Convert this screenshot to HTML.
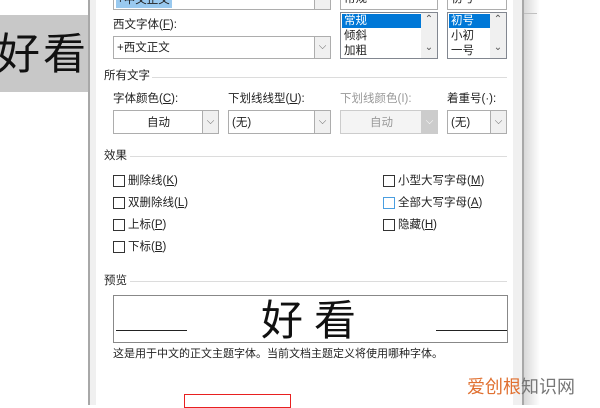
<!DOCTYPE html><html><head><meta charset="utf-8"><style>
*{margin:0;padding:0;box-sizing:border-box}
body{width:600px;height:405px;overflow:hidden;background:#fff;position:relative;font-family:"Liberation Sans","Microsoft YaHei","Noto Sans CJK SC",sans-serif;font-size:11.5px;color:#222}
.a{position:absolute}
.t{position:absolute;white-space:nowrap;line-height:14px}
.box{position:absolute;border:1px solid #adadad;background:#fff}
.btn{position:absolute;top:0;right:0;bottom:0;width:16px;border-left:1px solid #adadad;background:#f0f0f0;color:#666;font-size:10px;text-align:center}
.hl{position:absolute;height:1px;background:#dcdcdc}
.cb{position:absolute;width:12px;height:12px;border:1px solid #333;background:#fff}
u{text-decoration:underline}
</style></head><body>
<div class="a" style="left:0;top:15px;width:88px;height:77px;background:#c8c8c8"></div>
<div class="t" style="left:-3px;top:24px;font-size:43px;line-height:54px;color:#111;font-family:'Noto Sans CJK SC',sans-serif;letter-spacing:3px">好看</div>
<div class="a" style="left:88px;top:0;width:2px;height:405px;background:#a8a8a8"></div>
<div class="a" style="left:90px;top:0;width:6px;height:405px;background:#f0f0f0"></div>
<div class="a" style="left:513px;top:0;width:9px;height:405px;background:#f0f0f0"></div>
<div class="a" style="left:522px;top:0;width:2px;height:405px;background:#a8a8a8"></div>
<div class="a" style="left:524px;top:0;width:16px;height:405px;background:linear-gradient(90deg,#d8d8d8,#fff)"></div>
<div class="a" style="left:524px;top:13px;width:13px;height:1px;background:#c0c0c0"></div>
<div class="box" style="left:113px;top:-14px;width:218px;height:24px"><div class="a" style="left:2px;top:8px;width:56px;height:13px;background:#99c9ef"></div><div class="t" style="left:3px;top:6px">+中文正文</div><div class="btn">⌵</div></div>
<div class="box" style="left:340px;top:-14px;width:98px;height:24px"><div class="t" style="left:3px;top:5px">常规</div></div>
<div class="box" style="left:447px;top:-14px;width:60px;height:24px"><div class="t" style="left:3px;top:5px">初号</div></div>
<div class="t" style="left:113px;top:18px">西文字体(<u>F</u>):</div>
<div class="box" style="left:113px;top:36px;width:218px;height:23px"><div class="t" style="left:3px;top:4px">+西文正文</div><div class="btn" style="line-height:20px">⌵</div></div>
<div class="box" style="left:340px;top:12px;width:98px;height:47px;border-color:#828790">
<div class="a" style="left:1px;top:1px;width:80px;height:14px;background:#0078d7"></div>
<div class="t" style="left:3px;top:1px;color:#fff">常规</div><div class="t" style="left:3px;top:16px">倾斜</div><div class="t" style="left:3px;top:31px">加粗</div>
<div class="a" style="right:0;top:0;width:16px;height:45px;background:#f0f0f0;color:#555;font-size:10px;text-align:center;line-height:14px">⌃<br><br>⌄</div></div>
<div class="box" style="left:447px;top:12px;width:60px;height:47px;border-color:#828790">
<div class="a" style="left:1px;top:1px;width:42px;height:14px;background:#0078d7"></div>
<div class="t" style="left:3px;top:1px;color:#fff">初号</div><div class="t" style="left:3px;top:16px">小初</div><div class="t" style="left:3px;top:31px">一号</div>
<div class="a" style="right:0;top:0;width:16px;height:45px;background:#f0f0f0;color:#555;font-size:10px;text-align:center;line-height:14px">⌃<br><br>⌄</div></div>
<div class="t" style="left:104px;top:69px">所有文字</div><div class="hl" style="left:152px;top:77px;width:355px"></div>
<div class="t" style="left:113px;top:92px">字体颜色(<u>C</u>):</div>
<div class="t" style="left:228px;top:92px">下划线线型(<u>U</u>):</div>
<div class="t" style="left:340px;top:92px;color:#999">下划线颜色(I):</div>
<div class="t" style="left:447px;top:92px">着重号(·):</div>
<div class="box" style="left:113px;top:110px;width:106px;height:24px"><div class="t" style="left:33px;top:5px">自动</div><div class="btn" style="line-height:21px">⌵</div></div>
<div class="box" style="left:228px;top:110px;width:103px;height:24px"><div class="t" style="left:3px;top:5px">(无)</div><div class="btn" style="line-height:21px">⌵</div></div>
<div class="box" style="left:340px;top:110px;width:98px;height:24px;border-color:#ccc;background:#f4f4f4"><div class="t" style="left:29px;top:5px;color:#999">自动</div><div class="btn" style="border-color:#ccc;background:#ccc;color:#fff;line-height:21px">⌵</div></div>
<div class="box" style="left:447px;top:110px;width:60px;height:24px"><div class="t" style="left:3px;top:5px">(无)</div><div class="btn" style="line-height:21px">⌵</div></div>
<div class="t" style="left:104px;top:149px">效果</div><div class="hl" style="left:130px;top:156px;width:377px"></div>
<div class="cb" style="left:113px;top:175px"></div><div class="t" style="left:128px;top:174px">删除线(<u>K</u>)</div>
<div class="cb" style="left:113px;top:197px"></div><div class="t" style="left:128px;top:196px">双删除线(<u>L</u>)</div>
<div class="cb" style="left:113px;top:219px"></div><div class="t" style="left:128px;top:218px">上标(<u>P</u>)</div>
<div class="cb" style="left:113px;top:241px"></div><div class="t" style="left:128px;top:240px">下标(<u>B</u>)</div>
<div class="cb" style="left:383px;top:175px"></div><div class="t" style="left:398px;top:174px">小型大写字母(<u>M</u>)</div>
<div class="cb" style="left:383px;top:197px;border-color:#4a9ee0"></div><div class="t" style="left:398px;top:196px">全部大写字母(<u>A</u>)</div>
<div class="cb" style="left:383px;top:219px"></div><div class="t" style="left:398px;top:218px">隐藏(<u>H</u>)</div>
<div class="t" style="left:104px;top:274px">预览</div><div class="hl" style="left:130px;top:281px;width:377px"></div>
<div class="a" style="left:113px;top:295px;width:395px;height:48px;border:1px solid #888;background:#fff">
<div class="a" style="left:2px;top:34px;width:71px;height:1px;background:#222"></div>
<div class="a" style="left:322px;top:34px;width:71px;height:1px;background:#222"></div>
<div class="t" style="left:147px;top:-5px;font-size:42px;line-height:54px;color:#111;font-family:'Noto Sans CJK SC',sans-serif;letter-spacing:11px">好看</div>
</div>
<div class="t" style="left:113px;top:347px;font-size:11px">这是用于中文的正文主题字体。当前文档主题定义将使用哪种字体。</div>
<div class="a" style="left:184px;top:394px;width:107px;height:14px;border:1px solid #e82020"></div>
<div class="t" style="left:467px;top:376px;font-size:18px;line-height:22px;color:#999"><span style="color:#e07030">爱创根</span><span style="color:#777">知识网</span></div>
</body></html>
